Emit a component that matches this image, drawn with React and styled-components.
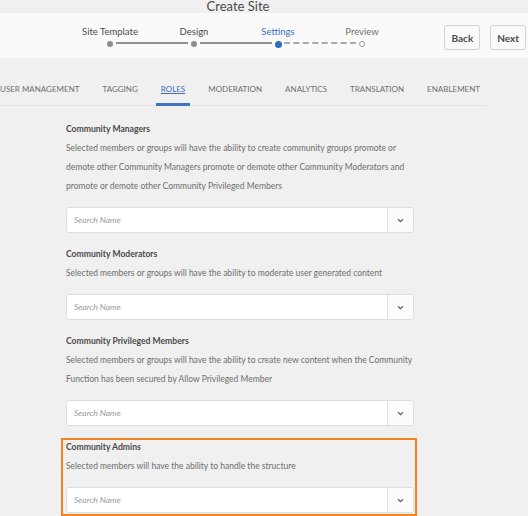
import React from "react";
import styled, { createGlobalStyle } from "styled-components";

const GlobalStyle = createGlobalStyle`
  html, body {
    margin: 0;
    padding: 0;
    background: #f0f0f0;
    font-family: "Lato", "Noto Sans", sans-serif;
  }
  * { box-sizing: border-box; }
`;

const Page = styled.div`
  width: 528px;
  height: 516px;
  overflow: hidden;
  background: #f0f0f0;
`;

const TitleBar = styled.div`
  height: 13px;
  padding-right: 52px;
  text-align: center;
  font-size: 13px;
  line-height: 12px;
  color: #4b4b4b;
`;

const Header = styled.header`
  height: 45px;
  background: #fafafa;
  display: flex;
  align-items: center;
  padding-left: 68px;
  padding-right: 2px;
`;

const Stepper = styled.div`
  display: grid;
  grid-template-columns: repeat(4, 84px);
  margin-top: 2px;
`;

const Step = styled.div`
  position: relative;
  display: flex;
  flex-direction: column;
  align-items: center;
  gap: 2px;

  /* connector to the next step's dot */
  &::after {
    content: "";
    display: ${(p) => (p.$last ? "none" : "block")};
    position: absolute;
    left: calc(50% + 6px);
    width: 72px;
    bottom: 4px;
    border-top: 2px ${(p) => (p.$dashed ? "dashed" : "solid")} #909090;
    opacity: ${(p) => (p.$dashed ? 0.75 : 1)};
  }
`;

const StepLabel = styled.span`
  font-size: 9.5px;
  line-height: 14px;
  color: ${(p) => (p.$active ? "#3d72c4" : p.$future ? "#707070" : "#4b4b4b")};
  white-space: nowrap;
`;

const Dot = styled.span`
  width: ${(p) => (p.$active ? 7 : 6)}px;
  height: ${(p) => (p.$active ? 7 : 6)}px;
  border-radius: 50%;
  background: ${(p) =>
    p.$active ? "#2f6dc4" : p.$future ? "transparent" : "#8c8c8c"};
  border: ${(p) => (p.$future ? "1px solid #9a9a9a" : "none")};
  margin-bottom: ${(p) => (p.$active ? 0 : 0.5)}px;
`;

const Actions = styled.div`
  margin-left: auto;
  display: flex;
  gap: 10px;
  margin-top: 4px;
`;

const Button = styled.button`
  height: 25px;
  padding: 0 6px;
  border: 1px solid #d2d2d2;
  border-radius: 3px;
  background: #fafafa;
  color: #4b4b4b;
  font-family: inherit;
  font-size: 10px;
  font-weight: 700;
  cursor: pointer;
`;

const TabBar = styled.nav`
  display: flex;
  align-items: flex-end;
  height: 48px;
  width: 491px;
  margin-left: -5px;
  gap: 13px;
  border-bottom: 1px solid #e3e3e3;
`;

const Tab = styled.a`
  padding: 0 5px 8px;
  margin-bottom: -1px;
  font-size: 8px;
  line-height: 12px;
  text-transform: uppercase;
  white-space: nowrap;
  color: ${(p) => (p.$active ? "#3d6fb8" : "#6e6e6e")};
  text-decoration: ${(p) => (p.$active ? "underline" : "none")};
  border-bottom: 3px solid ${(p) => (p.$active ? "#3d72c4" : "transparent")};
  cursor: pointer;
`;

const Content = styled.main`
  width: 414px;
  padding: 14px 0 0 66px;
  display: flex;
  flex-direction: column;
  gap: 12px;
`;

const Section = styled.section`
  display: flex;
  flex-direction: column;
  ${(p) =>
    p.$highlight &&
    `
    margin: 0 -3px 0 -5px;
    padding: 0 1px 1px 3px;
    border: 2px solid #f5821f;

    & > h3 {
      margin-top: -2px;
    }
  `}
`;

const Heading = styled.h3`
  margin: 0;
  font-size: 8.6px;
  line-height: 19px;
  font-weight: 700;
  color: #4b4b4b;
`;

const Description = styled.p`
  margin: 0;
  font-size: 8.5px;
  line-height: 19px;
  color: #6e6e6e;
  white-space: nowrap;
`;

const Select = styled.div`
  margin-top: 11px;
  height: 26px;
  display: flex;
  background: #fff;
  border: 1px solid #dedede;
  border-radius: 3px;
`;

const SearchInput = styled.input`
  flex: 1;
  min-width: 0;
  border: none;
  outline: none;
  background: transparent;
  padding: 0 7px;
  font-family: inherit;
  font-size: 8.5px;
  font-style: italic;
  color: #4b4b4b;

  &::placeholder {
    color: #9a9a9a;
  }
`;

const DropButton = styled.button`
  width: 26px;
  border: none;
  border-left: 1px solid #e3e3e3;
  background: #fcfcfc;
  display: flex;
  align-items: center;
  justify-content: center;
  padding: 0;
  border-radius: 0 3px 3px 0;
`;

const Chevron = () => (
  <svg width="7" height="5" viewBox="0 0 7 5">
    <path d="M1 1.2 L3.5 3.6 L6 1.2" fill="none" stroke="#55606e" strokeWidth="1.3" />
  </svg>
);

const steps = [
  { label: "Site Template" },
  { label: "Design" },
  { label: "Settings", active: true },
  { label: "Preview", future: true },
];

const tabs = [
  "User Management",
  "Tagging",
  "Roles",
  "Moderation",
  "Analytics",
  "Translation",
  "Enablement",
];

const roles = [
  {
    title: "Community Managers",
    lines: [
      "Selected members or groups will have the ability to create community groups promote or",
      "demote other Community Managers promote or demote other Community Moderators and",
      "promote or demote other Community Privileged Members",
    ],
  },
  {
    title: "Community Moderators",
    lines: ["Selected members or groups will have the ability to moderate user generated content"],
  },
  {
    title: "Community Privileged Members",
    lines: [
      "Selected members or groups will have the ability to create new content when the Community",
      "Function has been secured by Allow Privileged Member",
    ],
  },
  {
    title: "Community Admins",
    lines: ["Selected members will have the ability to handle the structure"],
    highlight: true,
  },
];

export default function App() {
  return (
    <Page>
      <GlobalStyle />
      <TitleBar>Create Site</TitleBar>

      <Header>
        <Stepper>
          {steps.map((s, i) => (
            <Step
              key={s.label}
              $last={i === steps.length - 1}
              $dashed={steps[i + 1]?.future}
            >
              <StepLabel $active={s.active} $future={s.future}>
                {s.label}
              </StepLabel>
              <Dot $active={s.active} $future={s.future} />
            </Step>
          ))}
        </Stepper>
        <Actions>
          <Button>Back</Button>
          <Button>Next</Button>
        </Actions>
      </Header>

      <TabBar>
        {tabs.map((t) => (
          <Tab key={t} $active={t === "Roles"}>
            {t}
          </Tab>
        ))}
      </TabBar>

      <Content>
        {roles.map((r) => (
          <Section key={r.title} $highlight={r.highlight}>
            <Heading>{r.title}</Heading>
            {r.lines.map((l) => (
              <Description key={l}>{l}</Description>
            ))}
            <Select>
              <SearchInput placeholder="Search Name" />
              <DropButton>
                <Chevron />
              </DropButton>
            </Select>
          </Section>
        ))}
      </Content>
    </Page>
  );
}
